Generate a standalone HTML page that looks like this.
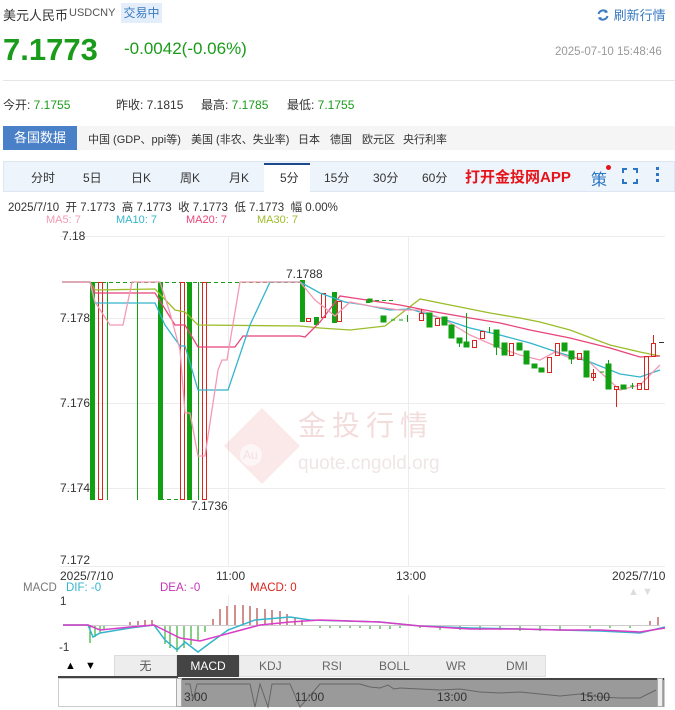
<!DOCTYPE html>
<html><head><meta charset="utf-8"><style>
*{margin:0;padding:0;box-sizing:border-box}
body{width:675px;height:710px;background:#fff;font-family:"Liberation Sans","Noto Sans CJK SC",sans-serif;position:relative;overflow:hidden;color:#333}
.a{position:absolute;white-space:nowrap}
</style></head><body>
<div class="a" style="left:3px;top:5px;font-size:13px;color:#333">美元人民币</div>
<div class="a" style="left:69px;top:7px;font-size:11px;color:#555">USDCNY</div>
<div class="a" style="left:121px;top:3px;width:41px;height:20px;background:#e3eefa;color:#3a7ac0;font-size:12px;line-height:20px;text-align:center">交易中</div>
<div class="a" style="left:596px;top:5px;font-size:13px;color:#3a7ac0"><svg width="14" height="14" viewBox="0 0 14 14" style="vertical-align:-2px"><path d="M2.5 6A5 5 0 0 1 11 4M11.5 8A5 5 0 0 1 3 10" stroke="#3a7ac0" stroke-width="2" fill="none"/><path d="M9 1.5L12 4.5L8.5 5Z M5 12.5L2 9.5L5.5 9Z" fill="#3a7ac0"/></svg> 刷新行情</div>
<div class="a" style="left:3px;top:32px;font-size:31px;font-weight:bold;color:#1a9b1a">7.1773</div>
<div class="a" style="left:124px;top:39px;font-size:17px;color:#1a9b1a">-0.0042(-0.06%)</div>
<div class="a" style="left:555px;top:46px;font-size:11.5px;color:#999">2025-07-10 15:48:46</div>
<div class="a" style="left:3px;top:80px;width:672px;height:1px;background:#e6e6e6"></div>
<div class="a" style="left:3px;top:96px;font-size:12px;color:#333">今开: <span style="color:#1a9b1a">7.1755</span></div>
<div class="a" style="left:116px;top:96px;font-size:12px;color:#333">昨收: 7.1815</div>
<div class="a" style="left:201px;top:96px;font-size:12px;color:#333">最高: <span style="color:#1a9b1a">7.1785</span></div>
<div class="a" style="left:287px;top:96px;font-size:12px;color:#333">最低: <span style="color:#1a9b1a">7.1755</span></div>
<div class="a" style="left:3px;top:126px;width:674px;height:24px;background:#f5f5f5"></div>
<div class="a" style="left:3px;top:126px;width:74px;height:24px;background:#4a80c8;color:#fff;font-size:13px;line-height:24px;text-align:center">各国数据</div>
<div class="a" style="left:88px;top:131px;font-size:11px;color:#333">中国 (GDP、ppi等)</div>
<div class="a" style="left:191px;top:131px;font-size:11px;color:#333">美国 (非农、失业率)</div>
<div class="a" style="left:298px;top:131px;font-size:11px;color:#333">日本</div>
<div class="a" style="left:330px;top:131px;font-size:11px;color:#333">德国</div>
<div class="a" style="left:362px;top:131px;font-size:11px;color:#333">欧元区</div>
<div class="a" style="left:403px;top:131px;font-size:11px;color:#333">央行利率</div>
<div class="a" style="left:3px;top:161px;width:672px;height:31px;background:#eef4fb;border:1px solid #dde7f3"></div>
<div class="a" style="left:264px;top:163px;width:46px;height:29px;background:#fff;border-top:2px solid #1f4a8a"></div>
<div class="a" style="top:169px;left:0;font-size:12px;color:#333;width:470px;height:20px">
<span class="a" style="left:31px">分时</span><span class="a" style="left:83px">5日</span><span class="a" style="left:131px">日K</span><span class="a" style="left:180px">周K</span><span class="a" style="left:229px">月K</span><span class="a" style="left:280px">5分</span><span class="a" style="left:324px">15分</span><span class="a" style="left:373px">30分</span><span class="a" style="left:422px">60分</span></div>
<div class="a" style="left:465px;top:166px;font-size:15px;font-weight:bold;color:#e5141a">打开金投网APP</div>
<div class="a" style="left:591px;top:166px;font-size:16px;color:#2a76c4">策</div>
<div class="a" style="left:606px;top:165px;width:5px;height:5px;border-radius:50%;background:#e5141a"></div>
<svg class="a" style="left:622px;top:168px" width="16" height="16"><path d="M1 5V1H5M11 1H15V5M15 11V15H11M5 15H1V11" stroke="#2a76c4" stroke-width="2" fill="none"/></svg>
<div class="a" style="left:656px;top:167px;width:3px;height:3px;background:#2a76c4;box-shadow:0 6px 0 #2a76c4,0 12px 0 #2a76c4"></div>
<div class="a" style="left:8px;top:199px;font-size:11.5px;color:#333">2025/7/10 &nbsp;开 7.1773 &nbsp;高 7.1773 &nbsp;收 7.1773 &nbsp;低 7.1773 &nbsp;幅 0.00%</div>
<div class="a" style="left:46px;top:214px;font-size:11px;color:#f29ab5">MA5: 7</div>
<div class="a" style="left:116px;top:214px;font-size:11px;color:#33b5cc">MA10: 7</div>
<div class="a" style="left:186px;top:214px;font-size:11px;color:#e8457a">MA20: 7</div>
<div class="a" style="left:257px;top:214px;font-size:11px;color:#9bbd2a">MA30: 7</div>
<svg class="a" style="left:0;top:0" width="675" height="710" font-family="Liberation Sans,sans-serif">
<g stroke="#ececec" stroke-width="1">
<line x1="60" y1="236.5" x2="665" y2="236.5"/><line x1="60" y1="318.5" x2="665" y2="318.5"/><line x1="60" y1="403.5" x2="665" y2="403.5"/><line x1="60" y1="488.5" x2="665" y2="488.5"/><line x1="60" y1="566.5" x2="665" y2="566.5"/>
<line x1="228.5" y1="236" x2="228.5" y2="566"/><line x1="408.5" y1="236" x2="408.5" y2="566"/>
<line x1="228.5" y1="595" x2="228.5" y2="655"/><line x1="408.5" y1="595" x2="408.5" y2="655"/>
</g>
<g font-size="12" fill="#333"><text x="62" y="240">7.18</text><text x="60" y="322">7.178</text><text x="60" y="407">7.176</text><text x="60" y="492">7.174</text><text x="60" y="564">7.172</text>
<text x="286" y="278">7.1788</text><text x="191" y="510">7.1736</text>
<text x="60" y="580">2025/7/10</text><text x="216" y="580">11:00</text><text x="396" y="580">13:00</text><text x="612" y="580">2025/7/10</text></g>
<g opacity="0.12"><path d="M262 408L300 446L262 484L224 446Z" fill="#d44"/></g>
<circle cx="251" cy="455" r="11" fill="#fff" opacity="0.6"/>
<text x="298" y="435" font-size="28" fill="#f3dcdc" font-family="Noto Sans CJK SC,sans-serif" letter-spacing="6">金投行情</text>
<text x="298" y="469" font-size="19" fill="#efe6e6">quote.cngold.org</text>
<text x="243" y="459" font-size="12" fill="#f6dede">Au</text>
<g stroke-dasharray="4,3" stroke="#1a9b1a" fill="none"><line x1="95" y1="282.5" x2="300" y2="282.5"/><line x1="160" y1="499.5" x2="187" y2="499.5"/><line x1="375" y1="300.5" x2="395" y2="300.5"/></g>
<g fill="#11a011"><rect x="90" y="282" width="5" height="218"/><rect x="158" y="282" width="5" height="218"/><rect x="187" y="282" width="5" height="218"/>
<rect x="300" y="280" width="5" height="42"/><rect x="314" y="317" width="5" height="8"/><rect x="332" y="292" width="5" height="31"/><rect x="366" y="299" width="4" height="4"/></g>
<g stroke="#11a011" fill="none"><line x1="107.5" y1="282" x2="107.5" y2="500"/><line x1="137.5" y1="282" x2="137.5" y2="500"/><line x1="198.5" y1="282" x2="198.5" y2="500"/></g>
<g stroke="#d9251d" fill="none"><rect x="98.5" y="282.5" width="4" height="217"/><rect x="180.5" y="282.5" width="4" height="217"/><rect x="202.5" y="282.5" width="4" height="217"/>
<rect x="306.5" y="318.5" width="4" height="3"/><rect x="321.5" y="293.5" width="4" height="24"/><rect x="337.5" y="301.5" width="4" height="20"/></g>
<g fill="none" stroke-width="1.3">
<polyline stroke="#9bbd2a" points="62,282 90,282 95,290 155,289 175,310 185,312 198,325 300,326 320,328 350,330 385,326 420,299 450,305 490,313 520,318 540,322 570,330 610,345 640,352 660,356"/>
<polyline stroke="#e8457a" points="62,282 90,282 95,293 155,293 175,325 185,325 198,347 235,347 243,336 300,336 305,337 320,322 340,296 360,299 400,305 430,311 470,318 500,323 530,330 570,338 610,348 640,357 660,356"/>
<polyline stroke="#33b5cc" points="62,282 90,282 95,303 155,303 165,325 180,346 185,346 198,390 228,390 250,325 270,282 300,282 320,293 345,302 365,305 390,310 410,309 440,318 470,328 500,335 530,343 560,353 590,362 620,374 640,377 660,370"/>
<polyline stroke="#f29ab5" points="62,282 90,282 95,302 110,325 123,325 132,282 160,282 170,313 180,350 185,413 190,413 198,456 205,456 218,370 222,360 227,360 240,282 300,282 315,300 335,316 350,302 370,306 400,310 420,310 445,320 470,335 500,348 520,355 540,360 555,352 570,358 585,358 600,372 620,390 640,385 660,365"/>
</g>
<g font-size="11.5"><text x="23" y="591" fill="#777">MACD</text><text x="66" y="591" fill="#33b5cc">DIF: -0</text><text x="160" y="591" fill="#c433b5">DEA: -0</text><text x="250" y="591" fill="#d9251d">MACD: 0</text>
<text x="60" y="605" fill="#333">1</text><text x="59" y="651" fill="#333">-1</text></g>
<text x="628" y="595" font-size="11" fill="#ddd">▲ ▼</text>
<line x1="63" y1="625.5" x2="660" y2="625.5" stroke="#ccc"/>
<g stroke="#11a011"><path d="M90 626V643M95 626V637M100 626V633M104 626V630M165 626V644M170 626V648M177 626V652M184 626V648M191 626V645M198 626V640M205 626V632M320 626V628M330 626V628M340 626V628M350 626V628M360 626V628M370 626V629M380 626V629M390 626V629M400 626V628M420 626V628M440 626V630M460 626V630M480 626V630M500 626V630M520 626V631M540 626V631M560 626V631M590 626V628M610 626V628M630 626V628"/></g>
<g stroke="#a02020"><path d="M130 625V622M138 625V621M145 625V620M152 625V620M213 625V619M220 625V609M227 625V606M235 625V605M243 625V605M250 625V606M257 625V608M265 625V609M272 625V610M280 625V611M287 625V614M295 625V617M302 625V620M650 625V621M658 625V617"/></g>
<polyline fill="none" stroke="#33b5cc" stroke-width="1.5" points="63,625 88,625 93,637 100,633 130,628 154,625 165,640 177,650 185,642 198,652 210,643 228,630 255,620 290,617 310,620 380,622 420,626 470,628 520,629 560,630 600,631 640,633 665,627"/>
<polyline fill="none" stroke="#d93dc7" stroke-width="1.5" points="63,625 88,625 100,630 130,627 154,625 180,638 200,641 230,633 260,625 290,622 320,620 380,622 420,626 470,629 520,629 560,630 600,630 640,632 665,628"/>
</svg>
<div class="a" style="left:58px;top:655px;width:56px;height:22px;background:#fff;font-size:11px;line-height:22px;text-indent:7px;color:#000">▲ &nbsp;&nbsp;▼</div>
<div class="a" style="left:114px;top:655px;width:63px;height:22px;background:#ededed;border:1px solid #ddd;font-size:12px;line-height:21px;text-align:center;color:#555">无</div>
<div class="a" style="left:177px;top:655px;width:62px;height:22px;background:#444;font-size:12px;line-height:22px;text-align:center;color:#fff">MACD</div>
<div class="a" style="left:239px;top:655px;width:307px;height:22px;background:#ededed;border:1px solid #ddd;font-size:12px;line-height:21px;color:#666"><span class="a" style="left:19px">KDJ</span><span class="a" style="left:82px">RSI</span><span class="a" style="left:139px">BOLL</span><span class="a" style="left:206px">WR</span><span class="a" style="left:266px">DMI</span></div>
<div class="a" style="left:58px;top:676px;width:120px;height:3px;background:#444"></div>
<div class="a" style="left:58px;top:678px;width:607px;height:29px;border:1px solid #ccc;background:#fff"></div>
<div class="a" style="left:178px;top:678px;width:486px;height:29px;background:#9a9a9a;border-top:2px solid #444"></div>
<div class="a" style="left:176px;top:678px;width:6px;height:29px;background:#eee;border:1px solid #aaa"></div>
<div class="a" style="left:657px;top:678px;width:6px;height:29px;background:#eee;border:1px solid #aaa"></div>
<svg class="a" style="left:0;top:0" width="675" height="710"><polyline fill="none" stroke="#666" points="185,684 190,684 193,700 197,684 250,684 255,707 260,684 268,707 272,684 290,684 300,707 320,684 360,684 370,687 380,688 388,685 394,689 400,688 420,689 440,690 460,689 480,692 500,693 520,692 540,694 560,696 580,694 600,697 620,698 640,698 656,690"/>
<g font-size="12" fill="#333" font-family="Liberation Sans,sans-serif"><text x="184" y="701">3:00</text><text x="295" y="701">11:00</text><text x="437" y="701">13:00</text><text x="580" y="701">15:00</text></g></svg>
<svg class="a" style="left:0;top:0" width="675" height="710">
<g fill="#11a011" stroke="#11a011">
<rect x="368" y="299" width="4" height="3"/><rect x="381" y="316" width="5" height="6"/><line x1="391" y1="320" x2="395" y2="320"/><line x1="399" y1="320" x2="403" y2="320"/><line x1="407.5" y1="315" x2="407.5" y2="322"/>
<rect x="427" y="313" width="5" height="14"/><rect x="442" y="317" width="5" height="8"/><rect x="449" y="325" width="5" height="13"/><rect x="457" y="338" width="5" height="5"/><line x1="459.5" y1="338" x2="459.5" y2="347"/><rect x="464" y="342" width="5" height="5"/><line x1="466.5" y1="313" x2="466.5" y2="347"/>
<line x1="489.5" y1="327" x2="489.5" y2="333"/><rect x="494" y="330" width="5" height="17"/><line x1="496.5" y1="347" x2="496.5" y2="355"/><rect x="502" y="343" width="5" height="12"/><rect x="517" y="343" width="5" height="7"/><rect x="524" y="351" width="5" height="13"/><rect x="532" y="364" width="5" height="4"/><rect x="539" y="368" width="5" height="4"/>
<rect x="562" y="343" width="5" height="8"/><rect x="569" y="351" width="5" height="8"/><line x1="571.5" y1="351" x2="571.5" y2="364"/><rect x="584" y="351" width="5" height="26"/><line x1="600" y1="372" x2="604" y2="372"/><rect x="606" y="364" width="5" height="25"/><line x1="608.5" y1="360" x2="608.5" y2="389"/><rect x="621" y="385" width="5" height="4"/><line x1="630" y1="386" x2="634" y2="386"/><line x1="632.5" y1="383" x2="632.5" y2="389"/>
</g>
<g fill="none" stroke="#d9251d">
<rect x="419.5" y="313.5" width="4" height="7"/><line x1="421.5" y1="309" x2="421.5" y2="313"/><rect x="435.5" y="318.5" width="4" height="7"/><rect x="472.5" y="340.5" width="4" height="7"/><rect x="480.5" y="331.5" width="4" height="7"/><rect x="509.5" y="343.5" width="4" height="12"/><rect x="547.5" y="357.5" width="4" height="15"/><rect x="555.5" y="343.5" width="4" height="12"/><rect x="577.5" y="353.5" width="4" height="6"/><rect x="591.5" y="373.5" width="4" height="4"/><line x1="593.5" y1="369" x2="593.5" y2="381"/><rect x="614.5" y="386.5" width="4" height="3"/><line x1="616.5" y1="389" x2="616.5" y2="407"/><rect x="637.5" y="383.5" width="4" height="6"/><rect x="644.5" y="356.5" width="4" height="33"/><rect x="651.5" y="343.5" width="4" height="13"/><line x1="653.5" y1="335" x2="653.5" y2="343"/>
</g>
<line x1="659" y1="342.5" x2="664" y2="342.5" stroke="#333"/>
</svg>
</body></html>
